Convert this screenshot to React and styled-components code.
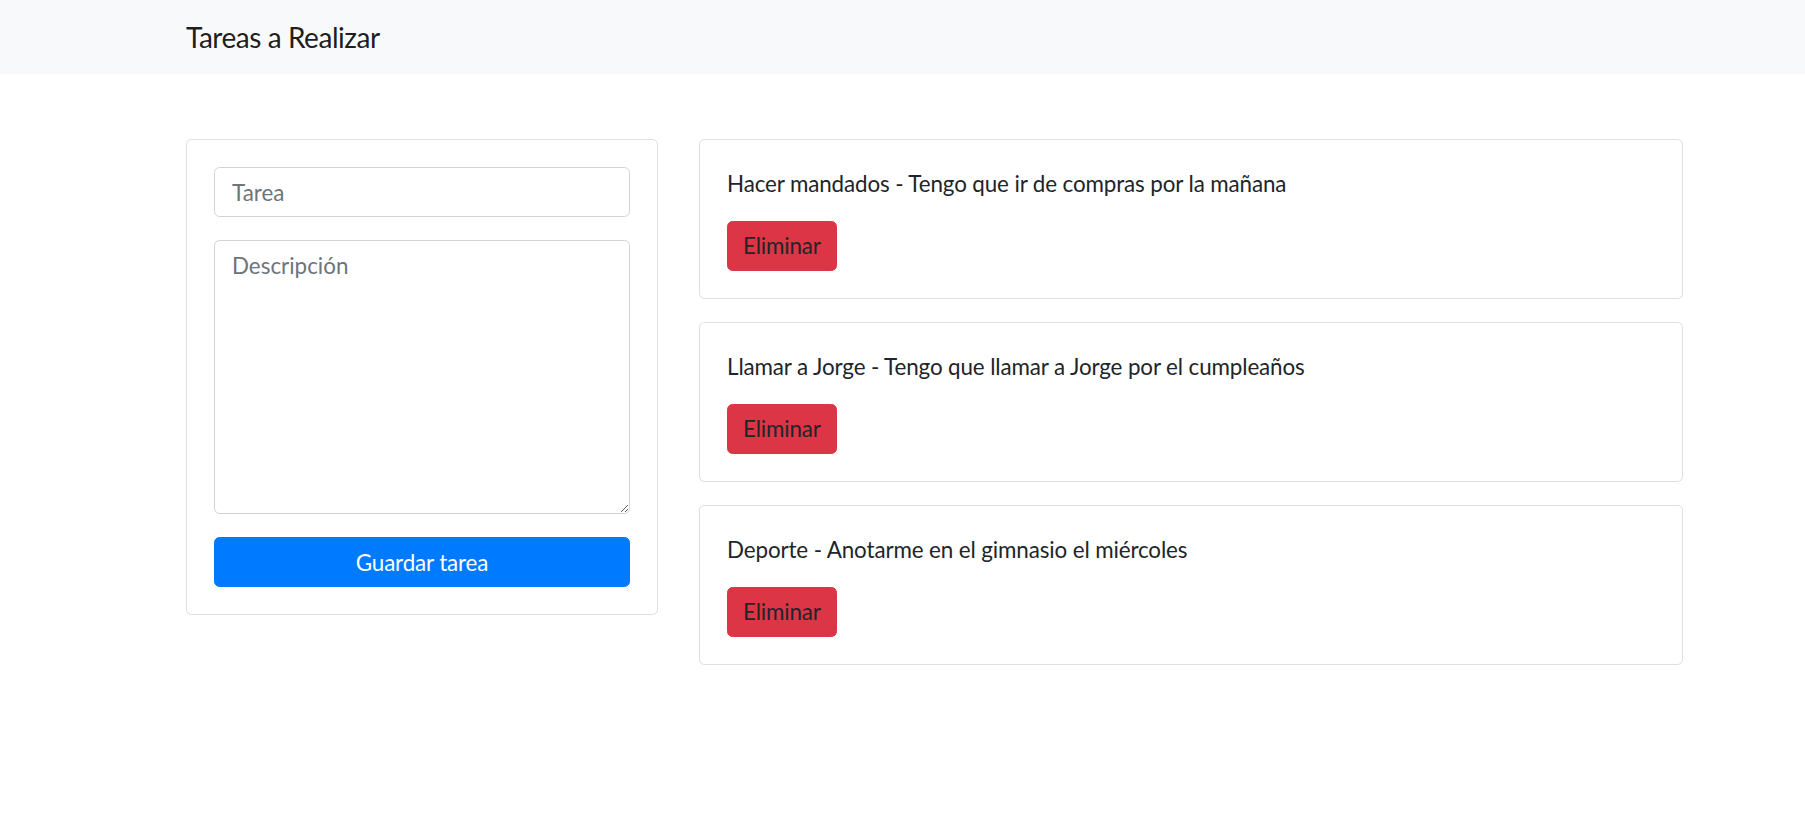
import React from 'react';
import styled, { createGlobalStyle } from 'styled-components';

const GlobalStyle = createGlobalStyle`
  * {
    box-sizing: border-box;
  }

  body {
    margin: 0;
    background: #fff;
    color: #212529;
    font-family: Lato, "Liberation Sans", sans-serif;
    font-size: 22.4px;
    line-height: 1.5;
  }
`;

const Navbar = styled.nav`
  height: 74px;
  background: #f8f9fa;
  display: flex;
  align-items: center;
  padding-left: 186px;
`;

const Brand = styled.span`
  font-size: 28px;
  line-height: 42px;
  letter-spacing: -0.45px;
  color: rgba(0, 0, 0, 0.9);
`;

const Layout = styled.div`
  display: grid;
  grid-template-columns: 472px 1fr;
  gap: 41px;
  align-items: start;
  margin: 65px 122px 0 186px;
`;

const Card = styled.div`
  border: 1px solid rgba(0, 0, 0, 0.125);
  border-radius: 5.6px;
  background: #fff;
  padding: 27px;
`;

const Form = styled.form`
  display: flex;
  flex-direction: column;
  gap: 23px;
`;

const fieldStyles = `
  width: 100%;
  border: 1px solid #ced4da;
  border-radius: 5.6px;
  padding: 0 17px;
  font-family: Lato, "Liberation Sans", sans-serif;
  font-size: 22.4px;
  color: #495057;
  background: #fff;
  outline: none;

  &::placeholder {
    color: #6c757d;
  }
`;

const Input = styled.input`
  ${fieldStyles}
  height: 50px;
`;

const TextArea = styled.textarea`
  ${fieldStyles}
  height: 274px;
  padding-top: 8px;
  line-height: 1.5;
  display: block;
`;

const Button = styled.button`
  height: 50px;
  border: 1px solid ${p => p.$bg};
  border-radius: 5.6px;
  background: ${p => p.$bg};
  color: ${p => p.$color};
  font-family: Lato, "Liberation Sans", sans-serif;
  font-size: 22.4px;
  letter-spacing: -0.15px;
  padding: 0 15px;
  width: ${p => (p.$block ? '100%' : 'auto')};
  cursor: pointer;
`;

const TaskList = styled.div`
  display: flex;
  flex-direction: column;
  gap: 23px;
`;

const TaskText = styled.p`
  margin: 0 0 20.4px;
  line-height: 33.6px;
  letter-spacing: -0.12px;
`;

const tareas = [
  { titulo: 'Hacer mandados', descripcion: 'Tengo que ir de compras por la mañana' },
  { titulo: 'Llamar a Jorge', descripcion: 'Tengo que llamar a Jorge por el cumpleaños' },
  { titulo: 'Deporte', descripcion: 'Anotarme en el gimnasio el miércoles' },
];

function App() {
  return (
    <>
      <GlobalStyle />
      <Navbar>
        <Brand>Tareas a Realizar</Brand>
      </Navbar>
      <Layout>
        <Card>
          <Form onSubmit={e => e.preventDefault()}>
            <Input placeholder="Tarea" />
            <TextArea placeholder="Descripción" />
            <Button $block $bg="#007bff" $color="#fff">Guardar tarea</Button>
          </Form>
        </Card>
        <TaskList>
          {tareas.map(t => (
            <Card key={t.titulo}>
              <TaskText>{t.titulo} - {t.descripcion}</TaskText>
              <Button $bg="#dc3545" $color="#212529">Eliminar</Button>
            </Card>
          ))}
        </TaskList>
      </Layout>
    </>
  );
}

export default App;
